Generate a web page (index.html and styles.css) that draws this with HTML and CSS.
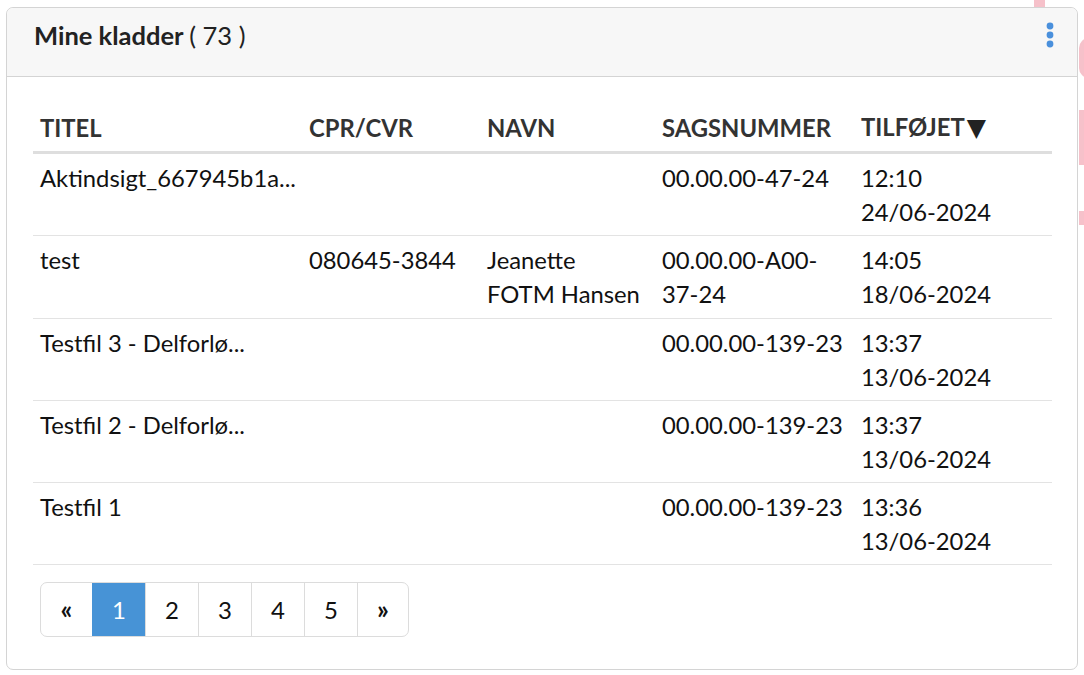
FILE: index.html
```html
<!DOCTYPE html>
<html lang="da">
<head>
<meta charset="utf-8">
<title>Mine kladder</title>
<link rel="stylesheet" href="styles.css">
</head>
<body>
<div class="bg-deco deco-a"></div>
<div class="bg-deco deco-b"></div>
<div class="bg-deco deco-c"></div>
<div class="bg-deco deco-d"></div>
<section class="panel">
  <header class="panel-head">
    <h2 class="panel-title">Mine kladder <span class="count">( 73 )</span></h2>
    <button class="kebab" aria-label="Menu">
      <svg width="10" height="26" viewBox="0 0 10 26"><circle cx="5" cy="4" r="3.4"/><circle cx="5" cy="13" r="3.4"/><circle cx="5" cy="22" r="3.4"/></svg>
    </button>
  </header>
  <div class="panel-body">
    <table class="drafts">
      <colgroup>
        <col class="c-title"><col class="c-cpr"><col class="c-name"><col class="c-case"><col class="c-added">
      </colgroup>
      <thead>
        <tr><th>TITEL</th><th>CPR/CVR</th><th>NAVN</th><th>SAGSNUMMER</th><th>TILFØJET<span class="sort">▼</span></th></tr>
      </thead>
      <tbody>
        <tr><td>Aktindsigt_667945b1a...</td><td></td><td></td><td>00.00.00-47-24</td><td>12:10<br>24/06-2024</td></tr>
        <tr><td>test</td><td>080645-3844</td><td>Jeanette FOTM Hansen</td><td>00.00.00-A00-<br>37-24</td><td>14:05<br>18/06-2024</td></tr>
        <tr><td>Testfil 3 - Delforlø...</td><td></td><td></td><td>00.00.00-139-23</td><td>13:37<br>13/06-2024</td></tr>
        <tr><td>Testfil 2 - Delforlø...</td><td></td><td></td><td>00.00.00-139-23</td><td>13:37<br>13/06-2024</td></tr>
        <tr><td>Testfil 1</td><td></td><td></td><td>00.00.00-139-23</td><td>13:36<br>13/06-2024</td></tr>
      </tbody>
    </table>
    <nav class="pager">
      <a class="pg arrow">«</a><a class="pg active">1</a><a class="pg">2</a><a class="pg">3</a><a class="pg">4</a><a class="pg">5</a><a class="pg arrow">»</a>
    </nav>
  </div>
</section>
</body>
</html>
```
FILE: styles.css
```css
html, body {
  margin: 0;
  padding: 0;
  background: #fff;
}
body {
  font-family: Lato, "Noto Sans", sans-serif;
  color: #111;
  position: relative;
  width: 1084px;
  height: 675px;
  overflow: hidden;
}
.bg-deco {
  position: absolute;
  background: #f6c1ca;
  z-index: 0;
}
.deco-a { left: 1034px; top: 0; width: 11px; height: 8px; }
.deco-b { left: 1079px; top: 38px; width: 10px; height: 40px; border-radius: 10px 0 0 10px; }
.deco-c { left: 1079px; top: 110px; width: 10px; height: 55px; }
.deco-d { left: 1079px; top: 211px; width: 10px; height: 14px; }

.panel {
  position: relative;
  z-index: 1;
  margin: 7px 0 0 6px;
  width: 1072px;
  box-sizing: border-box;
  border: 1px solid #d4d4d4;
  border-radius: 7px;
  background: #fff;
}
.panel-head {
  display: flex;
  align-items: center;
  justify-content: space-between;
  height: 69px;
  box-sizing: border-box;
  padding: 0 22px 14px 27px;
  background: #f7f7f7;
  border-bottom: 1px solid #d4d4d4;
  border-radius: 7px 7px 0 0;
}
.panel-title {
  margin: 0;
  font-size: 25.5px;
  font-weight: 700;
  color: #222;
  line-height: 30px;
}
.count {
  font-weight: 400;
}
.kebab {
  border: 0;
  background: none;
  padding: 0;
  display: flex;
  fill: #4a90dc;
}
.panel-body {
  padding: 26px 26px 32px 26px;
}
.drafts {
  width: 1019px;
  border-collapse: collapse;
  table-layout: fixed;
  font-size: 23.8px;
}
.c-title { width: 269px; }
.c-cpr { width: 178px; }
.c-name { width: 175px; }
.c-case { width: 199px; }
.c-added { width: 198px; }
.drafts th {
  text-align: left;
  font-weight: 700;
  color: #333;
  padding: 7px 7px 6px;
  line-height: 34px;
  border-bottom: 3px solid #dedede;
  white-space: nowrap;
}
.sort {
  font-family: "DejaVu Sans", sans-serif;
  font-size: 25px;
  font-weight: 400;
  color: #222;
  margin-left: 2px;
}
.drafts td {
  vertical-align: top;
  padding: 7px 7px 6.3px;
  line-height: 34px;
  border-bottom: 1px solid #e3e3e3;
}
.pager {
  display: inline-flex;
  margin-top: 17px;
  margin-left: 7px;
  border: 1px solid #dcdcdc;
  border-radius: 7px;
  overflow: hidden;
}
.pg {
  width: 53px;
  height: 53px;
  display: flex;
  align-items: center;
  justify-content: center;
  font-size: 24px;
  color: #111;
  border-left: 1px solid #dcdcdc;
  box-sizing: border-box;
}
.pg.arrow {
  font-size: 26px;
  font-weight: 700;
  padding-bottom: 2px;
}
.pg:first-child {
  border-left: 0;
  width: 51px;
}
.pg:last-child { width: 51px; }
.pg.active {
  background: #4793d6;
  color: #fff;
  border-left-color: #4793d6;
}
```
